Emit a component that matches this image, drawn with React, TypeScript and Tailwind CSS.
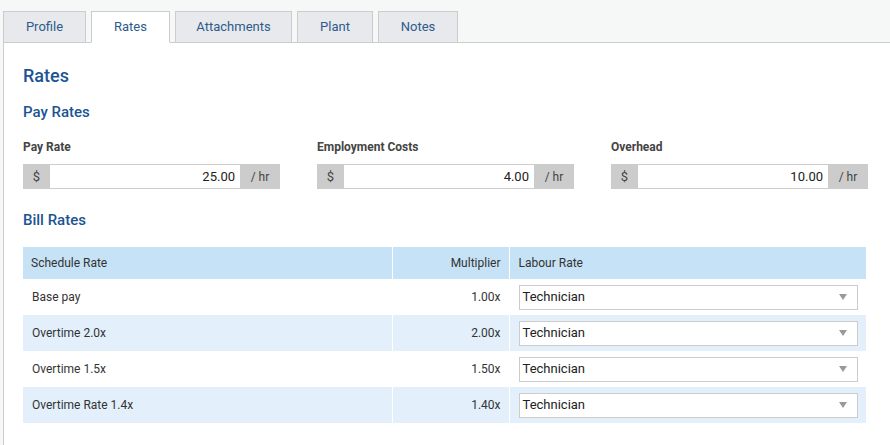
const tabs = [
  { label: 'Profile', w: 'w-[83px]' },
  { label: 'Rates', w: 'w-[79px]', active: true },
  { label: 'Attachments', w: 'w-[117px]' },
  { label: 'Plant', w: 'w-[76px]' },
  { label: 'Notes', w: 'w-[80px]' },
];

const payFields = [
  { label: 'Pay Rate', value: '25.00' },
  { label: 'Employment Costs', value: '4.00' },
  { label: 'Overhead', value: '10.00' },
];

const billRows = [
  { name: 'Base pay', mult: '1.00x' },
  { name: 'Overtime 2.0x', mult: '2.00x' },
  { name: 'Overtime 1.5x', mult: '1.50x' },
  { name: 'Overtime Rate 1.4x', mult: '1.40x' },
];

export default function App() {
  return (
    <div className="w-[890px] h-[445px] overflow-hidden bg-[#f6f7f7] pt-[11px] pl-[3px] font-['Roboto',sans-serif] text-[#333]">
      {/* Tabs */}
      <div className="flex gap-[5px] relative z-10">
        {tabs.map((t) => (
          <div
            key={t.label}
            className={`${t.w} h-[32px] flex items-center justify-center text-[13px] border border-[#cccccc] text-[#2d5b8c] ${
              t.active ? 'bg-white border-b-white' : 'bg-[#e8e9ec]'
            }`}
          >
            {t.label}
          </div>
        ))}
      </div>

      {/* Panel */}
      <div className="-mt-px border-l border-t border-[#cccccc] bg-white h-[420px] pl-[19px] pt-[21px]">
        <h1 className="text-[18px] leading-[24px] font-medium text-[#1c5493]">Rates</h1>
        <h2 className="mt-[14px] text-[15px] leading-[20px] font-medium text-[#1c5493]">Pay Rates</h2>

        <div className="mt-[17px] grid grid-cols-[257px_257px_257px] gap-x-[37px]">
          {payFields.map((f) => (
            <div key={f.label}>
              <div className="text-[12px] leading-[16px] font-bold text-[#444]">{f.label}</div>
              <div className="mt-[9px] flex h-[25px]">
                <div className="w-[27px] bg-[#cccccc] flex items-center justify-center text-[13px] text-[#444]">$</div>
                <div className="flex-1 border-y border-[#cccccc] flex items-center justify-end pr-[5px] text-[13px] text-[#222]">
                  {f.value}
                </div>
                <div className="w-[40px] bg-[#cccccc] flex items-center justify-center text-[12px] text-[#444]">/ hr</div>
              </div>
            </div>
          ))}
        </div>

        <h2 className="mt-[21px] text-[15px] leading-[20px] font-medium text-[#1c5493]">Bill Rates</h2>

        <table className="mt-[17px] w-[843px] border-collapse text-[12px] text-[#333]">
          <thead>
            <tr className="bg-[#c6e2f6] h-[32px]">
              <th className="w-[369px] text-left font-normal pl-[8px] border-r border-white">Schedule Rate</th>
              <th className="w-[117px] text-right font-normal pr-[8px] border-r border-white">Multiplier</th>
              <th className="text-left font-normal pl-[9px]">Labour Rate</th>
            </tr>
          </thead>
          <tbody>
            {billRows.map((r, i) => (
              <tr key={r.name} className={`h-[36px] ${i % 2 === 1 ? 'bg-[#e3f0fc]' : 'bg-white'}`}>
                <td className="pl-[9px] border-r border-white">{r.name}</td>
                <td className="text-right pr-[8px] border-r border-white">{r.mult}</td>
                <td className="pl-[9px] pr-[8px]">
                  <div className="h-[25px] border border-[#cccccc] bg-white flex items-center justify-between pl-[3px] pr-[10px] text-[13px] text-[#222]">
                    <span>Technician</span>
                    <svg width="8" height="6" viewBox="0 0 8 6" className="text-[#999]">
                      <path d="M0 0 H8 L4 6 Z" fill="currentColor" />
                    </svg>
                  </div>
                </td>
              </tr>
            ))}
          </tbody>
        </table>
      </div>
    </div>
  );
}
